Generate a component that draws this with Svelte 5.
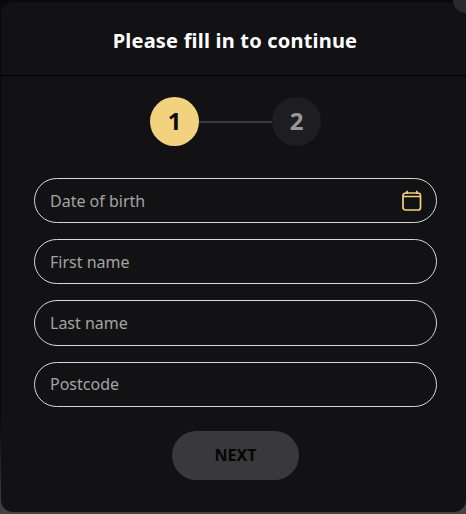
<script>
  let fields = [
    { label: "Date of birth", calendar: true },
    { label: "First name" },
    { label: "Last name" },
    { label: "Postcode" },
  ];
</script>

<div class="backdrop">
  <span class="close"></span>
  <section class="modal">
    <header class="head">Please fill in to continue</header>

    <div class="steps">
      <span class="step active">1</span>
      <span class="link"></span>
      <span class="step">2</span>
    </div>

    <form class="fields">
      {#each fields as field}
        <label class="field">
          <input type="text" placeholder={field.label} />
          {#if field.calendar}
            <svg class="cal" viewBox="0 0 20 21" width="20" height="21" fill="none" stroke="#f3d27f" stroke-width="1.7">
              <rect x="1" y="3" width="17.5" height="17" rx="2.5" />
              <path d="M1 6.5h17.5M5 .8v3M14.8 .8v3" />
            </svg>
          {/if}
        </label>
      {/each}
    </form>

    <button class="next" type="button">NEXT</button>
  </section>
</div>

<style>
  :global(body) {
    margin: 0;
    background: #3a3a3a;
  }

  .backdrop {
    position: relative;
    width: 466px;
    height: 514px;
    overflow: hidden;
    background: linear-gradient(#0a0a0a 0, #0a0a0a 420px, #444 514px);
    font-family: "Noto Sans", "Open Sans", sans-serif;
  }

  .close {
    position: absolute;
    top: -13px;
    right: -13px;
    width: 26px;
    height: 26px;
    border-radius: 50%;
    background: #2a2a2c;
    z-index: 2;
  }

  .modal {
    box-sizing: border-box;
    height: 510px;
    margin: 2px 0 0 1px;
    background: #121214;
    border-radius: 12px;
    display: flex;
    flex-direction: column;
  }

  .head {
    box-sizing: border-box;
    height: 74px;
    padding: 4px 0 0 3px;
    border-bottom: 1px solid #000;
    display: flex;
    align-items: center;
    justify-content: center;
    color: #fff;
    font-size: 20px;
    font-weight: 700;
    letter-spacing: 0.2px;
  }

  .steps {
    display: flex;
    align-items: center;
    justify-content: center;
    margin-top: 21px;
    padding-left: 4px;
  }

  .step {
    box-sizing: border-box;
    width: 49px;
    height: 49px;
    padding-bottom: 2px;
    border-radius: 50%;
    background: #1e1e20;
    color: #98989c;
    font-size: 24px;
    font-weight: 700;
    display: flex;
    align-items: center;
    justify-content: center;
  }

  .step.active {
    background: #f3d27f;
    color: #0c0c0c;
  }

  .link {
    width: 73px;
    height: 2px;
    background: #3a3a3c;
  }

  .fields {
    display: flex;
    flex-direction: column;
    gap: 16px;
    margin: 32px 29px 0 33px;
  }

  .field {
    position: relative;
    display: block;
  }

  input {
    box-sizing: border-box;
    display: block;
    width: 100%;
    height: 45.2px;
    padding: 0 15px;
    border: 1px solid #d8d8d8;
    border-radius: 23px;
    background: transparent;
    color: #fff;
    font: 400 16px "Noto Sans", "Open Sans", sans-serif;
    outline: none;
  }

  input::placeholder {
    color: #a3a3a3;
    opacity: 1;
  }

  .cal {
    position: absolute;
    top: 12px;
    right: 15.5px;
  }

  .next {
    align-self: center;
    width: 127px;
    height: 49px;
    margin-top: 24px;
    margin-left: 4px;
    border: none;
    border-radius: 24.5px;
    background: #39393b;
    color: #060606;
    font: 700 16px "Noto Sans", "Open Sans", sans-serif;
  }
</style>
